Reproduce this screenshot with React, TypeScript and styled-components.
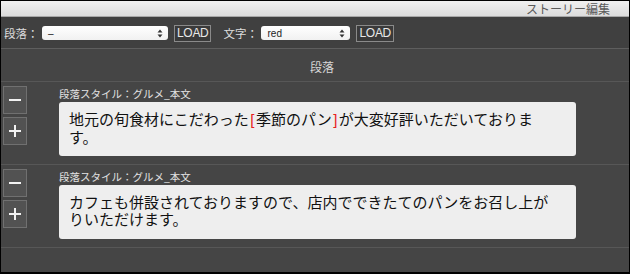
import styled, { createGlobalStyle } from 'styled-components';

const GlobalStyle = createGlobalStyle`
  html, body {
    margin: 0;
    padding: 0;
    background: #000;
  }
  * {
    box-sizing: border-box;
  }
`;

const paragraphs = [
  {
    style: 'グルメ_本文',
    parts: [
      { text: '地元の旬食材にこだわった' },
      { text: '[', red: true },
      { text: '季節のパン' },
      { text: ']', red: true },
      { text: 'が大変好評いただいております。' },
    ],
  },
  {
    style: 'グルメ_本文',
    parts: [
      {
        text: 'カフェも併設されておりますので、店内でできたてのパンをお召し上がりいただけます。',
      },
    ],
  },
];

const SelectArrows = () => (
  <svg width="6" height="9" viewBox="0 0 6 9">
    <path d="M3 0.5 L5.5 3.5 H0.5 Z" fill="#333" />
    <path d="M3 8.5 L5.5 5.5 H0.5 Z" fill="#333" />
  </svg>
);

const App = () => {
  return (
    <>
      <GlobalStyle />
      <Frame>
        <TitleBar>ストーリー編集</TitleBar>
        <Toolbar>
          <ToolLabel>段落：</ToolLabel>
          <SelectBox $width={126}>
            <span>–</span>
            <SelectArrows />
          </SelectBox>
          <LoadButton>LOAD</LoadButton>
          <ToolLabel>文字：</ToolLabel>
          <SelectBox $width={89}>
            <span>red</span>
            <SelectArrows />
          </SelectBox>
          <LoadButton>LOAD</LoadButton>
        </Toolbar>
        <SectionHeader>段落</SectionHeader>
        {paragraphs.map((p, i) => (
          <Row key={i}>
            <Controls>
              <SquareButton aria-label="remove">
                <svg width="14" height="14" viewBox="0 0 14 14">
                  <rect x="1" y="6" width="12" height="2" fill="#f2f2f2" />
                </svg>
              </SquareButton>
              <SquareButton aria-label="add">
                <svg width="14" height="14" viewBox="0 0 14 14">
                  <rect x="1" y="6" width="12" height="2" fill="#f2f2f2" />
                  <rect x="6" y="1" width="2" height="12" fill="#f2f2f2" />
                </svg>
              </SquareButton>
            </Controls>
            <Body>
              <StyleLabel>段落スタイル：{p.style}</StyleLabel>
              <TextBox>
                {p.parts.map((part, j) =>
                  part.red ? <Bracket key={j}>{part.text}</Bracket> : <span key={j}>{part.text}</span>
                )}
              </TextBox>
            </Body>
          </Row>
        ))}
      </Frame>
    </>
  );
};

export default App;

const Frame = styled.div`
  width: 630px;
  height: 274px;
  border: 1px solid #000;
  border-bottom-width: 2px;
  background: #454545;
  overflow: hidden;
  font-family: "Noto Sans CJK JP", "Noto Sans", sans-serif;
`;

const TitleBar = styled.div`
  height: 16px;
  padding-right: 19px;
  text-align: right;
  font-size: 12px;
  line-height: 15px;
  color: #5a5a5a;
  background: linear-gradient(180deg, #f0f0f0 0%, #dcdcdc 100%);
  border-bottom: 1px solid #a8a8a8;
`;

const Toolbar = styled.div`
  display: flex;
  align-items: center;
  height: 32px;
  padding: 1px 0 0 3px;
  background: #404040;
  border-bottom: 1px solid #5e5e5e;
`;

const ToolLabel = styled.span`
  width: 38px;
  font-size: 11.5px;
  color: #dcdcdc;
`;

const SelectBox = styled.div<{ $width: number }>`
  display: flex;
  align-items: center;
  justify-content: space-between;
  width: ${(p) => p.$width}px;
  height: 14px;
  padding: 0 5px 0 6px;
  border-radius: 3px;
  background: linear-gradient(180deg, #ffffff 0%, #f1f1f1 100%);
  font-family: "Liberation Sans", Arial, sans-serif;
  font-size: 10px;
  color: #222;
`;

const LoadButton = styled.button`
  height: 17px;
  margin: 1px 12px 0 6px;
  padding: 0 2px;
  border: 1px solid #8a8a8a;
  background: #3a3a3a;
  color: #e8e8e8;
  font-family: "Liberation Sans", Arial, sans-serif;
  font-size: 12px;
  line-height: 15px;
  letter-spacing: -0.3px;
  cursor: pointer;
`;

const SectionHeader = styled.div`
  height: 33px;
  padding: 11px 0 0 14px;
  text-align: center;
  font-size: 12px;
  line-height: 14px;
  color: #d6d6d6;
  border-bottom: 1px solid #575757;
`;

const Row = styled.div`
  display: flex;
  height: 83px;
  padding: 4px 0 0 2px;
  border-bottom: 1px solid #575757;
`;

const Controls = styled.div`
  display: flex;
  flex-direction: column;
  gap: 3px;
`;

const SquareButton = styled.button`
  display: flex;
  align-items: center;
  justify-content: center;
  width: 24px;
  height: 28px;
  padding: 0;
  background: #525252;
  border: 1px solid #707070;
  cursor: pointer;
`;

const Body = styled.div`
  display: flex;
  flex-direction: column;
  margin-left: 32px;
  width: 517px;
`;

const StyleLabel = styled.div`
  height: 16px;
  font-size: 10.5px;
  line-height: 16px;
  color: #e2e2e2;
`;

const TextBox = styled.div`
  height: 54px;
  padding: 8px 20px 0 10px;
  border-radius: 3px;
  background: #eeeeee;
  font-size: 15px;
  line-height: 17px;
  color: #111;
  line-break: strict;
`;

const Bracket = styled.span`
  padding: 0 1.5px;
  font-family: "Liberation Sans", Arial, sans-serif;
  color: #e8201c;
`;
